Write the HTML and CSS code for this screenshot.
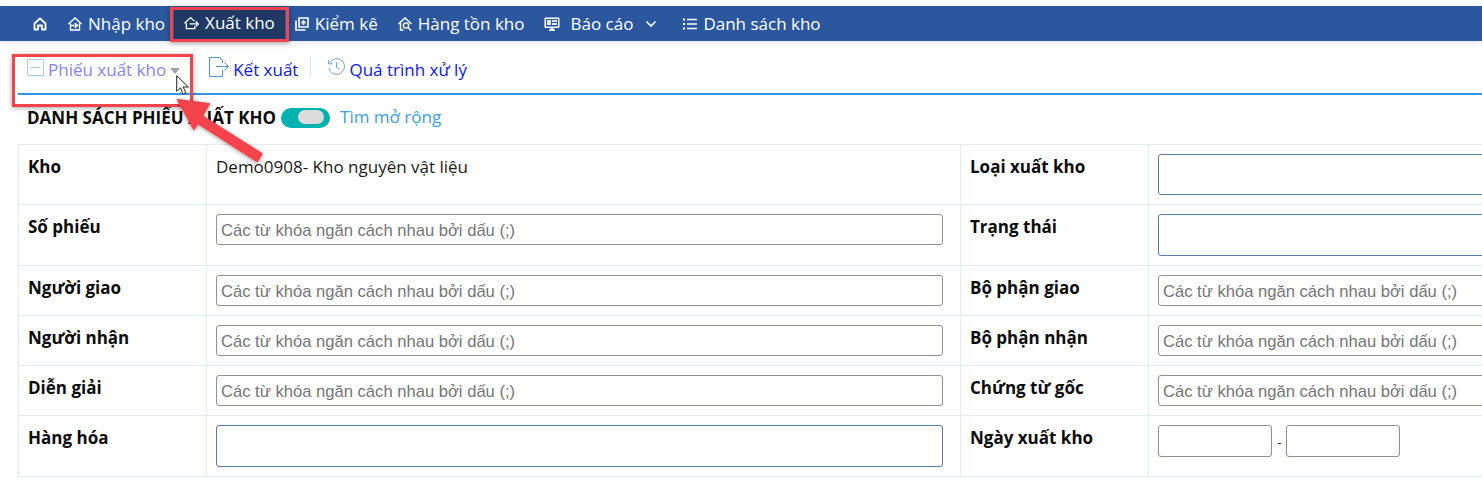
FILE: index.html
```html
<!DOCTYPE html>
<html lang="vi">
<head>
<meta charset="utf-8">
<title>Danh sách phiếu xuất kho</title>
<link rel="stylesheet" href="styles.css">
</head>
<body>
<div class="page">
  <nav class="nav">
    <a class="nav-item"><svg class="ico" viewBox="0 0 14 14"><path d="M1.500 6.500 7 1.500l5.500 5v6H9V8.500H5v4H1.500z" fill="none" stroke="#fff" stroke-width="1.800" stroke-linejoin="round"/></svg></a>
    <a class="nav-item import"><svg class="ico" viewBox="0 0 14 14"><path d="M2.500 6.500v6.500h9V6.500M.5 7 7 1l6.500 6M2.500 8.500h6.500M6.800 6l2.700 2.500-2.700 2.500" fill="none" stroke="#fff" stroke-width="1.400"/></svg><span>Nhập kho</span></a>
    <a class="nav-item active"><svg class="ico wide" viewBox="0 0 16 14"><path d="M2.500 7v6h9v-2.500M.5 7.300 7 1.200 11 5M6 8h9M12.500 5.200 15.300 8l-2.800 2.800" fill="none" stroke="#fff" stroke-width="1.400"/></svg><span>Xuất kho</span></a>
    <a class="nav-item"><svg class="ico" viewBox="0 0 14 14"><path d="M4 1h9v9H4zM1 3.500V13h9.500M8.500 3v5M6 5.500h5" fill="none" stroke="#fff" stroke-width="1.600"/></svg><span>Kiểm kê</span></a>
    <a class="nav-item"><svg class="ico" viewBox="0 0 14 14"><path d="M.5 7 7 1l6.500 6M2.500 6v7h3" fill="none" stroke="#fff" stroke-width="1.400"/><circle cx="8" cy="8.500" r="2.600" fill="none" stroke="#fff" stroke-width="1.400"/><path d="m10 10.500 3 3" stroke="#fff" stroke-width="1.600"/></svg><span>Hàng tồn kho</span></a>
    <a class="nav-item reports"><svg class="ico monitor" viewBox="0 0 16 14"><path d="M.5 1.500C.5 1 1 .5 1.500.5h13c.5 0 1 .5 1 1V10c0 .5-.5 1-1 1h-13c-.5 0-1-.5-1-1z" fill="#fff"/><path d="M2 2h12v7.500H2z" fill="#2b579e"/><path d="M3 3h4v5H3zM8 3h5v2H8zM8 6h5v2H8z" fill="#dfe6f2"/><path d="M6.500 11h3v1.500H11V14H5v-1.500h1.500z" fill="#fff"/></svg><span>Báo cáo</span><svg class="chevron" viewBox="0 0 12 8"><path d="m1.500 1.500 4.500 4.500 4.500-4.500" fill="none" stroke="#fff" stroke-width="1.600"/></svg></a>
    <a class="nav-item list"><svg class="ico list-ico" viewBox="0 0 14 12"><path d="M4 1.500h10M4 6h10M4 10.500h10" stroke="#fff" stroke-width="1.400"/><path d="M0 .5h2v2H0zM0 5h2v2H0zM0 9.500h2v2H0z" fill="#fff"/></svg><span>Danh sách kho</span></a>
  </nav>

  <div class="toolbar">
    <a class="tool disabled"><svg class="tool-ico doc" viewBox="0 0 17 17"><path d="M.5.500h16v16H.5zM3.500 8.500h10" fill="none" stroke="#a9cbe8" stroke-width="1"/></svg><span>Phiếu xuất kho</span><i class="caret"></i></a>
    <span class="sep"></span>
    <a class="tool export"><svg class="tool-ico exp" viewBox="0 0 20 20"><path d="M13.500 6V3.500L10.500.5H.5v19h13V13" fill="none" stroke="#4a94d8" stroke-width="1"/><path d="M7 9.500h12M15.500 5.500l4 4-4 4" fill="none" stroke="#4a94d8" stroke-width="1"/></svg><span>Kết xuất</span></a>
    <span class="sep"></span>
    <a class="tool"><svg class="tool-ico clock" viewBox="0 0 18 18"><path d="M2.600 5.200A7.800 7.800 0 1 1 2 10" fill="none" stroke="#6ba8d8" stroke-width="1"/><path d="M1.500 2v3.800h3.800M9.500 4.500v5l3 1.500" fill="none" stroke="#6ba8d8" stroke-width="1"/></svg><span>Quá trình xử lý</span></a>
  </div>

  <div class="heading">
    <h1 class="title">DANH SÁCH PHIẾU XUẤT KHO</h1>
    <span class="switch"><i class="knob"></i></span>
    <a class="more">Tìm mở rộng</a>
  </div>

  <table class="filters">
    <colgroup><col class="c-label"><col class="c-field"><col class="c-label"><col class="c-last"></colgroup>
    <tr>
      <th>Kho</th><td class="plain">Demo0908- Kho nguyên vật liệu</td>
      <th>Loại xuất kho</th><td><div class="box tall first"></div></td>
    </tr>
    <tr>
      <th>Số phiếu</th><td><input class="field" placeholder="Các từ khóa ngăn cách nhau bởi dấu (;)"></td>
      <th>Trạng thái</th><td><div class="box tall"></div></td>
    </tr>
    <tr>
      <th>Người giao</th><td><input class="field" placeholder="Các từ khóa ngăn cách nhau bởi dấu (;)"></td>
      <th>Bộ phận giao</th><td><input class="field" placeholder="Các từ khóa ngăn cách nhau bởi dấu (;)"></td>
    </tr>
    <tr>
      <th>Người nhận</th><td><input class="field" placeholder="Các từ khóa ngăn cách nhau bởi dấu (;)"></td>
      <th>Bộ phận nhận</th><td><input class="field" placeholder="Các từ khóa ngăn cách nhau bởi dấu (;)"></td>
    </tr>
    <tr>
      <th>Diễn giải</th><td><input class="field" placeholder="Các từ khóa ngăn cách nhau bởi dấu (;)"></td>
      <th>Chứng từ gốc</th><td><input class="field" placeholder="Các từ khóa ngăn cách nhau bởi dấu (;)"></td>
    </tr>
    <tr>
      <th>Hàng hóa</th><td><div class="box tall"></div></td>
      <th>Ngày xuất kho</th>
      <td><div class="dates"><input class="field date"><span class="dash">-</span><input class="field date"></div></td>
    </tr>
  </table>

  <div class="mark mark-nav"></div>
  <div class="mark mark-tool"></div>
  <svg class="arrow" viewBox="0 0 110 80" width="110" height="80">
    <path d="M85 56 25 18l-3 6.500 59 38z" fill="#f4434a" stroke="#f4434a" stroke-width="3" stroke-linejoin="round"/>
    <path d="M2 2l31 4-15 25z" fill="#f4434a" stroke="#f4434a" stroke-width="2" stroke-linejoin="round"/>
  </svg>
  <svg class="cursor" viewBox="0 0 14 21" width="14" height="21">
    <path d="M.7.700v15.600l3.800-3.400 2.600 6.400 2.800-1.200-2.700-6.100h5.200z" fill="#fff" stroke="#222" stroke-width="1"/>
  </svg>
</div>
</body>
</html>
```
FILE: styles.css
```css
* { box-sizing: border-box; }
html, body { margin: 0; padding: 0; background: #fff; }
body { font-family: "Open Sans", "Noto Sans", sans-serif; color: #111; overflow: hidden; }
.page { position: relative; width: 1482px; height: 486px; overflow: hidden; padding-top: 6px; background: #fff; }

.nav { display: flex; align-items: center; gap: 20px; height: 35px; padding-left: 33px; background: #2b579e; box-shadow: 0 2px 8px rgba(0,0,0,.1); color: #fff; font-size: 17px; }
.nav-item { display: flex; align-items: center; gap: 6px; height: 100%; color: #fff; white-space: nowrap; }
.ico { width: 14px; height: 14px; flex: none; }
.ico.wide { width: 15px; }
.ico.monitor { width: 16px; }
.import { margin-left: 1px; }
.nav-item.active { margin: 2px -10px 0 -11px; padding: 0 10px 3px; height: 32px; align-self: flex-start; background: #1f3864; }
.reports { gap: 11px; margin-left: -1px; }
.chevron { width: 12px; height: 8px; margin-left: 1px; }
.list { margin-left: 6px; }
.list-ico { height: 12px; }

.toolbar { display: flex; align-items: center; height: 54px; margin: 0 0 0 18px; padding: 4px 0 0 9px; border-bottom: 2px solid #2f97e8; font-size: 17px; }
.tool { display: flex; align-items: center; gap: 4px; color: #0c18e6; white-space: nowrap; }
.tool.disabled { color: #8585f0; }
.tool-ico { flex: none; margin-top: -4px; }
.doc { width: 17px; height: 17px; }
.exp { width: 20px; height: 20px; }
.clock { width: 18px; height: 18px; }
.caret { width: 0; height: 0; margin-top: 4px; border: 5.500px solid transparent; border-top: 6px solid #a3a3a8; border-bottom: 0; }
.sep { width: 1px; height: 20px; margin: -6px 16px 0 12px; background: #d8e2ec; }
.export + .sep { margin-left: 12px; }

.heading { display: flex; align-items: center; height: 49px; padding: 0 0 3px 27px; }
.title { margin: 0; font-size: 17px; line-height: 20px; font-weight: 700; color: #0c0c0c; }
.switch { display: flex; align-items: center; justify-content: flex-end; width: 49px; height: 20px; margin-left: 5px; padding-right: 6px; border-radius: 10px; background: #00b3ae; }
.knob { width: 26px; height: 14px; margin-top: -2px; border-radius: 7px; background: #dcdcdc; }
.more { margin: 0 0 3px 10px; font-size: 17px; color: #3a9fe8; }

.filters { table-layout: fixed; width: 1530px; margin-left: 18px; border-collapse: collapse; font-size: 17px; line-height: 22px; }
.c-label { width: 188px; }
.c-field { width: 754px; }
.c-last { width: 400px; }
.filters th, .filters td { padding: 9px 17px 9px 9px; border: 1px solid #e3ebf3; vertical-align: top; }
.filters th { padding: 11px 10px 0 9px; text-align: left; font-weight: 700; color: #0c0c0c; }
.filters td.plain { padding-top: 11px; padding-left: 9px; color: #1a1a1a; }
.field { display: block; width: 100%; height: 31px; padding: 2px 3px 0 4px; border: 1px solid #8f8f9d; border-radius: 3px; background: #fff; font-family: "Liberation Sans", Arial, sans-serif; font-size: 16.600px; color: #333; outline: none; }
.field::placeholder { color: #757575; opacity: 1; }
.box { height: 42px; border: 1px solid #5b7cb0; border-radius: 3px; background: #fff; }
.box.first { height: 41px; }
.dates { display: flex; align-items: center; gap: 5px; }
.field.date { width: 114px; height: 32px; }
.dash { width: 4px; margin: 4px 0 0; font-size: 14px; color: #333; }

.mark { position: absolute; border: 3px solid #f4434a; box-shadow: 0 1px 5px rgba(0,0,0,.35); pointer-events: none; }
.mark-nav { left: 170px; top: 7px; width: 119px; height: 35px; }
.mark-tool { left: 12px; top: 54px; width: 181px; height: 53px; }
.arrow { position: absolute; left: 176px; top: 98px; overflow: visible; filter: drop-shadow(0 1px 2px rgba(0,0,0,.4)); }
.cursor { position: absolute; left: 176px; top: 75px; }
```
